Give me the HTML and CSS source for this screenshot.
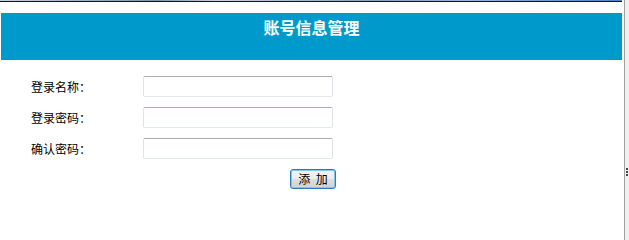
FILE: index.html
```html
<!DOCTYPE html>
<html lang="zh-CN">
<head>
<meta charset="utf-8">
<title>账号信息管理</title>
<link rel="stylesheet" href="styles.css">
</head>
<body>
<div class="frame">
  <div class="main">
    <div class="topbar"></div>
    <div class="header">
      <h1 class="title">账号信息管理</h1>
    </div>
    <form class="form" onsubmit="return false">
      <label class="label" for="name">登录名称：</label>
      <div class="field"><input class="input" id="name" type="text"></div>
      <label class="label" for="pwd">登录密码：</label>
      <div class="field"><input class="input" id="pwd" type="password"></div>
      <label class="label" for="pwd2">确认密码：</label>
      <div class="field"><input class="input" id="pwd2" type="password"></div>
      <div class="actions"><button class="btn" type="submit">添&nbsp;&nbsp;加</button></div>
    </form>
  </div>
  <div class="splitter">
    <div class="grip"><span></span><span></span><span></span></div>
  </div>
</div>
</body>
</html>
```

FILE: styles.css
```css
html, body {
  margin: 0;
  padding: 0;
  background: #ffffff;
  height: 100%;
}
body {
  font-family: "Noto Sans CJK SC", "DejaVu Sans", sans-serif;
  font-size: 12px;
  color: #000;
}
.frame {
  display: flex;
  height: 240px;
  overflow: hidden;
}
.main {
  width: 624px;
  flex: none;
}
.topbar {
  width: 622px;
  height: 1px;
  border-bottom: 1px solid #0c1626;
  background: linear-gradient(90deg, #c9d2de 0%, #7f93b0 25%, #c9d2de 35%, #8aa0c0 60%, #9fb4d6 75%, #4a7fd0 100%);
}
.header {
  margin: 11px 0 0 1px;
  width: 621px;
  height: 47px;
  background: #0099cc;
  box-sizing: border-box;
  padding-top: 3px;
}
.title {
  margin: 0;
  text-align: center;
  color: #ffffff;
  font-size: 16px;
  font-weight: bold;
  line-height: 22px;
}
.form {
  display: grid;
  grid-template-columns: 112px 193px;
  grid-auto-rows: 21px;
  row-gap: 10px;
  padding: 16px 0 0 31px;
  margin: 0;
}
.label {
  display: flex;
  align-items: center;
  font-size: 12px;
  line-height: 14px;
}
.field {
  display: flex;
  align-items: stretch;
}
.input {
  width: 190px;
  height: 21px;
  box-sizing: border-box;
  margin: 0;
  border: 1px solid #e2e3ea;
  border-top-color: #abadb3;
  border-bottom-color: #e3e9ef;
  border-radius: 2px;
  background: #fff;
  padding: 0 3px;
  font: inherit;
}
.actions {
  grid-column: 2;
  display: flex;
  justify-content: flex-end;
}
.btn {
  -webkit-appearance: none;
  appearance: none;
  width: 46px;
  height: 20px;
  box-sizing: border-box;
  margin: 0;
  padding: 0;
  border: 1px solid #2a7cc0;
  border-radius: 3px;
  background: linear-gradient(#f4f4f4 0%, #ececec 50%, #dedede 51%, #d2d2d2 100%);
  box-shadow: inset 0 0 0 1px #7cc6f0;
  font-family: "Noto Sans CJK SC", sans-serif;
  font-size: 12px;
  line-height: 16px;
  color: #000;
  white-space: nowrap;
}
.splitter {
  flex: 1;
  border-left: 1px solid #a0a0a0;
  background: #f0f0f0;
  display: flex;
  flex-direction: column;
  align-items: center;
  justify-content: center;
  padding-top: 104px;
  box-sizing: border-box;
}
.grip {
  display: flex;
  flex-direction: column;
  gap: 1px;
}
.grip span {
  width: 2px;
  height: 2px;
  background: #444;
}
```
